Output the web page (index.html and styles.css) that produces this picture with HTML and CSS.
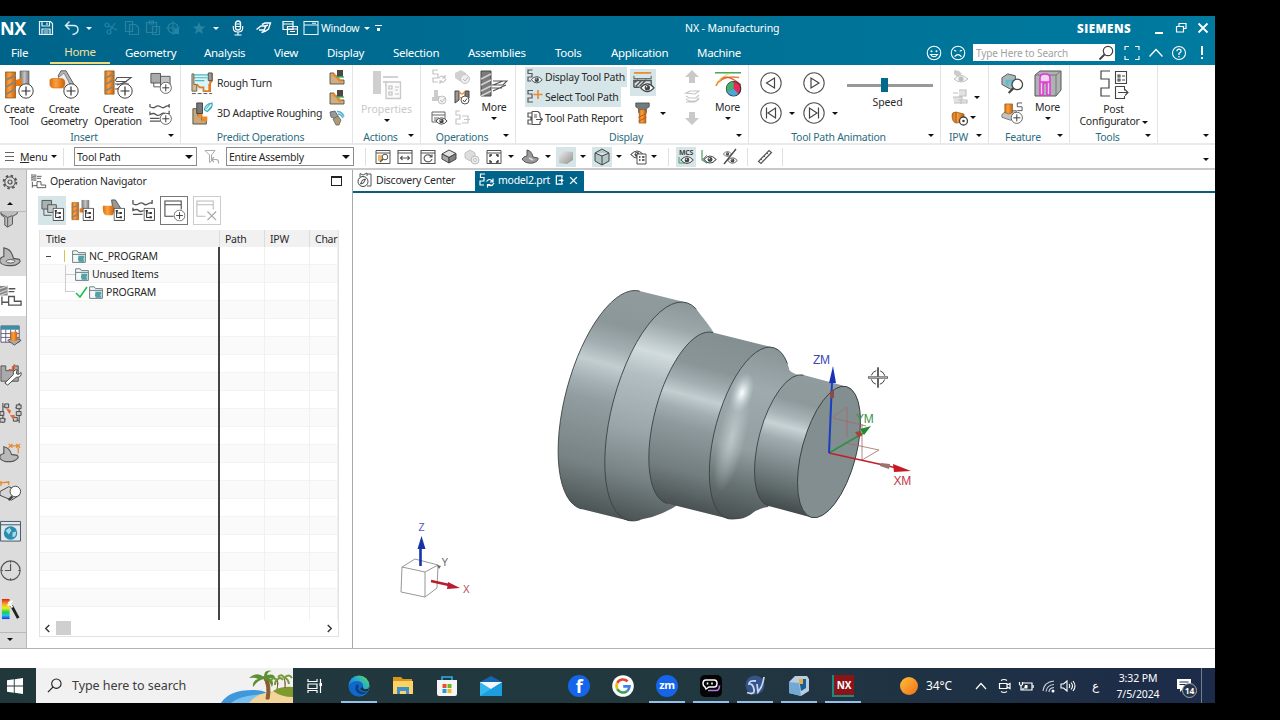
FILE: index.html
```html
<!DOCTYPE html>
<html lang="en">

<head>
    <meta charset="UTF-8">
    <meta name="viewport" content="width=device-width, initial-scale=1.0">
    <title>NX - Manufacturing</title>
    <link rel="stylesheet" href="styles.css">
</head>

<body>
    <!-- icon sprite -->
    <svg class="sprite" width="0" height="0">
        <defs>
            <linearGradient id="steel" x1="0" y1="0" x2="1" y2="0"><stop offset="0" stop-color="#777"/><stop offset=".5" stop-color="#c4c4c4"/><stop offset="1" stop-color="#777"/></linearGradient>
            <linearGradient id="orange" x1="0" y1="0" x2="1" y2="0"><stop offset="0" stop-color="#d86f12"/><stop offset=".4" stop-color="#ffa03c"/><stop offset="1" stop-color="#c8600c"/></linearGradient>
            <linearGradient id="soft" x1="0" y1="0" x2="1" y2="1"><stop offset="0" stop-color="#eee"/><stop offset="1" stop-color="#909090"/></linearGradient>
            <linearGradient id="rainbow" x1="0" y1="0" x2="0" y2="1"><stop offset="0" stop-color="#e02020"/><stop offset=".25" stop-color="#f5a623"/><stop offset=".45" stop-color="#e8f020"/><stop offset=".65" stop-color="#20d040"/><stop offset=".82" stop-color="#20c0f0"/><stop offset="1" stop-color="#2030e0"/></linearGradient>
            <linearGradient id="edgeg" x1="0" y1="1" x2="1" y2="0"><stop offset="0" stop-color="#0c5cc0"/><stop offset=".5" stop-color="#1b9de2"/><stop offset="1" stop-color="#5ee05a"/></linearGradient>
            <linearGradient id="sun" x1="0" y1="0" x2="1" y2="1"><stop offset="0" stop-color="#ffc03a"/><stop offset="1" stop-color="#f0701a"/></linearGradient>
        </defs>
        <symbol id="plus" viewBox="0 0 16 16"><circle cx="8" cy="8" r="7.2" fill="#fff" stroke="#444"/><path d="M8 3.5v9M3.5 8h9" stroke="#333" stroke-width="1.2"/></symbol>
        <symbol id="eye" viewBox="0 0 16 10"><path d="M1 5Q8-3 15 5Q8 13 1 5Z" fill="#fff" stroke="#444" stroke-width="1.2"/><circle cx="8" cy="5" r="2.8" fill="#3f4a4c"/><circle cx="7.2" cy="4" r=".8" fill="#fff"/></symbol>
        <symbol id="mill" viewBox="0 0 10 28"><path d="M0 1h10v25H0Z" fill="url(#orange)" stroke="#8a5a20" stroke-width=".8"/><path d="M0 9L10 4M0 16L10 10M0 23L10 17" stroke="#8b8378" stroke-width="1.8"/></symbol>
        <symbol id="tree" viewBox="0 0 13 15"><path d="M.6.6h11.8v13.8H.6Z" fill="#fff" stroke="#444" stroke-width="1.1"/><path d="M3.5 3v8.5M3.5 6h4M3.5 11h4" stroke="#333" stroke-width="1.2"/><path d="M2.5 2.5h2.5v2H2.5ZM7 5h2.5v2.2H7ZM7 9.8h2.5V12H7Z" fill="#333"/></symbol>
        <symbol id="folder" viewBox="0 0 14 13"><path d="M.6 12.4V.8h4.6l1.2 1.8h7v9.8Z" fill="#f4f8f8" stroke="#6f8084"/><path d="M.6 4.4h12.8" stroke="#6f8084"/><path d="M6 5.5h6.5v6H6Z" fill="#7fc4c0"/><path d="M7 7h5M6 9h5M7 11h5" stroke="#2d7d8c"/></symbol>

        <symbol id="save" viewBox="0 0 16 16"><path d="M1.5 1.5h11l2 2v11h-13Z M4 1.5v4.5h7.5V1.5M4 14.500V9h8v5.500M5.500 11h5M5.500 13h5M9 2.500v2.500" fill="none" stroke="#e6f4f8" stroke-width="1.2"/></symbol>
        <symbol id="undo" viewBox="0 0 16 16"><path d="M5.500 1.500L1.500 5.500L5.500 9.500M2 5.500H9.500Q14 5.500 14 9.500T8.500 14.500" fill="none" stroke="#d9eef5" stroke-width="1.4"/></symbol>
        <symbol id="cut" viewBox="0 0 16 16"><g fill="none" stroke="#2484a4" stroke-width="1.200"><circle cx="4" cy="5" r="2"/><circle cx="6" cy="12" r="2"/><path d="M6 6L14 10M7 10.500L12 3"/></g></symbol>
        <symbol id="copy" viewBox="0 0 16 16"><path d="M1.500 1.500h7v10h-7ZM5.500 4.500h6l3 3v7h-9Z" fill="#08668a" stroke="#2484a4" stroke-width="1.200"/></symbol>
        <symbol id="paste" viewBox="0 0 16 16"><path d="M1.500 2.500h10v10h-10ZM4.500 1h4v3h-4ZM7.500 6.500h7v8h-7Z" fill="#08668a" stroke="#2484a4" stroke-width="1.200"/></symbol>
        <symbol id="target" viewBox="0 0 16 16"><g fill="none" stroke="#2484a4" stroke-width="1.200"><circle cx="8" cy="8" r="5"/><path d="M8 1v14M1 8h14"/></g><path d="M9 9h5v5H9Z" fill="#2484a4"/></symbol>
        <symbol id="star" viewBox="0 0 16 16"><path d="M8 2l1.700 4.300 4.600.3-3.500 3 1.100 4.500L8 11.600l-3.900 2.500 1.100-4.500-3.500-3 4.600-.3Z" fill="#2484a4"/></symbol>
        <symbol id="mic" viewBox="0 0 16 16"><rect x="5.500" y="1" width="5" height="9" rx="2.500" fill="none" stroke="#fff" stroke-width="1.300"/><path d="M3.300 6v2Q3.300 12 8 12t4.700-4V6M8 12v3M4.500 15h7M6 4h4M6 6.500h4" fill="none" stroke="#fff" stroke-width="1.100"/></symbol>
        <symbol id="touch" viewBox="0 0 16 16"><path d="M.5 9.500L5 6h5L8 10H3M6 4.500L9 3h5.500L12.500 9l-3 2-4 1.500M8 6.500L12 5" fill="none" stroke="#fff" stroke-width="1.400"/></symbol>
        <symbol id="windows" viewBox="0 0 16 16"><path d="M1 1.500h10v8H1ZM5.500 6.500h10v8h-10Z" fill="#08668a" stroke="#fff" stroke-width="1.200"/><path d="M1 4h10M5.500 9h10M8 11.500h5" stroke="#fff"/></symbol>
        <symbol id="window" viewBox="0 0 16 16"><path d="M1 1.500h14v13H1ZM1 5h14" fill="none" stroke="#e6f4f8" stroke-width="1.100"/><path d="M9 3.200h4" stroke="#fff"/></symbol>
        <symbol id="restore" viewBox="0 0 12 12"><path d="M4 4V1.500h7v5H8.500M1.500 4.500h7v5.500h-7Z" fill="none" stroke="#fff" stroke-width="1.200"/></symbol>
        <symbol id="close" viewBox="0 0 12 12"><path d="M1.500 1.500l9 9M10.500 1.500l-9 9" stroke="#fff" stroke-width="1.800"/></symbol>
        <symbol id="smile" viewBox="0 0 16 16"><circle cx="8" cy="8" r="6" fill="none" stroke="#fff"/><circle cx="5.800" cy="6.500" r=".9" fill="#fff"/><circle cx="10.200" cy="6.500" r=".9" fill="#fff"/><path d="M4.800 9.300Q8 13.400 11.200 9.300Z" fill="none" stroke="#fff" stroke-width=".9"/></symbol>
        <symbol id="sad" viewBox="0 0 16 16"><circle cx="8" cy="8" r="6" fill="none" stroke="#fff"/><path d="M4.500 5.500l2 1M11.500 5.500l-2 1M5 11.300Q8 7.500 11 11.300" fill="none" stroke="#fff" stroke-width="1.100"/></symbol>
        <symbol id="lens" viewBox="0 0 16 16"><circle cx="10" cy="6" r="4.700" fill="none" stroke="#444" stroke-width="1.200"/><path d="M6.500 9.500L1.500 14.500" stroke="#444" stroke-width="1.900"/></symbol>
        <symbol id="full" viewBox="0 0 16 16"><path d="M1 5V1.500h4M11 1.500h4V5M15 11v3.500h-4M5 14.500H1V11" fill="none" stroke="#fff" stroke-width="1.100"/></symbol>
        <symbol id="chev" viewBox="0 0 16 16"><path d="M1.500 11.500L8 4.500l6.500 7" fill="none" stroke="#fff" stroke-width="1.300"/></symbol>
        <symbol id="help" viewBox="0 0 16 16"><circle cx="8" cy="8" r="6.500" fill="none" stroke="#fff" stroke-width="1.100"/><path d="M5.900 6.300Q6 4.200 8 4.200T10.100 6.200Q10 7.400 8 8.300V10" fill="none" stroke="#fff" stroke-width="1.200"/><circle cx="8" cy="11.800" r=".8" fill="#fff"/></symbol>

        <symbol id="c-tool" viewBox="0 0 30 30"><path d="M16 1h9v16h-9Z" fill="url(#steel)" stroke="#666" stroke-width=".7"/><path d="M12 10l6-2v8h-6Z" fill="#e77a18"/><use href="#mill" x="1" y="1" width="11" height="29"/><use href="#plus" x="14" y="13" width="16" height="16"/></symbol>
        <symbol id="c-geo" viewBox="0 0 30 30"><path d="M12 .8h5L27 18l-5 6L9 6Z" fill="#b4b4b4" stroke="#555" stroke-width=".9"/><path d="M15 3l8 15-5 6L9 8Z" fill="#efefef" stroke="#777" stroke-width=".8"/><path d="M1 12Q0 9 3 8.500H13Q16 9 16 13t-3 5H4Q0 17 1 12Z" fill="url(#orange)" stroke="#c8701c" stroke-width=".6"/><use href="#plus" x="14" y="13" width="16" height="16"/></symbol>
        <symbol id="c-op" viewBox="0 0 30 30"><use href="#mill" x="1" y="0" width="11" height="26"/><path d="M14 7.500h14l-5 4H13M14 15l10-3.500M12 14h14M12 19h9M14 19L25 14M14 7.500L12 11" fill="none" stroke="#555" stroke-width="1.200"/><use href="#plus" x="14" y="13" width="16" height="16"/></symbol>
        <symbol id="c-prog" viewBox="0 0 24 24"><path d="M2 1.500h10v10H2Z" fill="#aaa" stroke="#555"/><path d="M12 4.500h10v10H12Z" fill="#c4c4c4" stroke="#555"/><path d="M5 11.500v4h8" fill="none" stroke="#555"/><use href="#plus" x="11" y="10" width="13" height="13"/></symbol>
        <symbol id="c-meth" viewBox="0 0 24 24"><path d="M1 2v3q4 2 6 0t5 0 5 0 4 0V2M1 10v3q4-2 6 0t5 0 5-1 4 0V9M1 17h10M1 20h11" fill="none" stroke="#555" stroke-width="1.300"/><use href="#plus" x="11" y="11" width="13" height="13"/></symbol>

        <symbol id="rough" viewBox="0 0 24 24"><path d="M3 3h18v9l-5 7H3Z" fill="#daf4f6"/><path d="M3 3h16M3 6h14M4 9h10" stroke="#4cb9c4" stroke-width="1.300"/><path d="M1 2v18h5V13H3V2Z" fill="#d9b98c" stroke="#665"/><path d="M6 13l3 3h4v4h7V2h2v7l-3 4v7" fill="none" stroke="#e27a26" stroke-width="1.800"/><path d="M18 1h4v8h-4Z" fill="#999" stroke="#555"/><path d="M1 22.500h21" stroke="#555" stroke-dasharray="4 2"/></symbol>
        <symbol id="adapt" viewBox="0 0 24 24"><path d="M2 7h5v7h4v5h5v4H2Z" fill="#caa67b" stroke="#554"/><path d="M7 12h5v3h5v5h-6v-4H7Z" fill="#e88a28"/><path d="M6 1h6v11H6Z" fill="#777" stroke="#444"/><path d="M14 8q1-6 8-7q1 5-5 9Z" fill="#d9f3f8" stroke="#35a9b8" stroke-width="1.200"/><path d="M16 7l4-5M18 8l4-4" stroke="#35a9b8"/></symbol>
        <symbol id="stair" viewBox="0 0 16 16"><path d="M1 4h4v3h4v4h6v4H1Z" fill="#cfae85" stroke="#554" stroke-width=".9"/><path d="M4 5l4 3 4 5" stroke="#f08a24" stroke-width="2.500" fill="none"/><path d="M8 1h6v7H8Z" fill="#4b4b45"/><path d="M7 8h8" stroke="#49b070" stroke-width="1.400"/></symbol>
        <symbol id="brush" viewBox="0 0 16 16"><path d="M1 2l5-1 3 5-2 3-5-2Z" fill="#999" stroke="#555" stroke-width=".8"/><path d="M8 1.500q5 0 7 5M9 4q3 0 5 4" fill="none" stroke="#54b3cf" stroke-width="1.500"/><path d="M4 9l5-3 3 4-2 5H7Z" fill="#b19878" stroke="#665" stroke-width=".8"/></symbol>
        <symbol id="props" viewBox="0 0 30 30"><path d="M1 1h8v23H1Z" fill="#cfcfcf"/><path d="M11 7h15M11 12h4M13 15h3" stroke="#c4c4c4" stroke-width="1.600"/><path d="M14 12h14.500v16.500H14Z" fill="#fafafa" stroke="#c8c8c8" stroke-width="1.300"/><path d="M17 16h3v3h-3ZM17 22h3v3h-3ZM23 17h4M23 20h3M23 24h4" fill="none" stroke="#c0c0c0" stroke-width="1.200"/></symbol>
        <symbol id="g-path" viewBox="0 0 18 18"><path d="M8 2H3v4h5v4H3v4h5" fill="none" stroke="#c3c3c3" stroke-width="1.200"/><path d="M9 10q3-4 6 0M16 11q-2 5-6 2M15 7v3h-3M10 16v-3h2" fill="none" stroke="#c3c3c3" stroke-width="1.200"/></symbol>
        <symbol id="g-ver" viewBox="0 0 18 18"><path d="M2 5l6-3 5 3v6l-5 3-6-4Z" fill="#d0d0d0"/><circle cx="12" cy="11" r="4.500" fill="#eee" stroke="#c4c4c4"/><path d="M10 11l2 2 3-4" fill="none" stroke="#bbb"/></symbol>
        <symbol id="g-sim" viewBox="0 0 18 18"><path d="M4 2h4v6h4v5H2V9h2Z" fill="#ccc"/><circle cx="12" cy="12" r="4" fill="#f2f2f2" stroke="#c4c4c4"/><path d="M10 12l2 2 3-4" fill="none" stroke="#bbb"/></symbol>
        <symbol id="verify" viewBox="0 0 18 18"><path d="M2 3h4v9l-4 3Z" fill="#999" stroke="#444"/><path d="M12 3h4v7l-4 3Z" fill="#777" stroke="#444"/><path d="M6 3q3 6 6 0M6 9q3 2 6 0" fill="none" stroke="#e58a30" stroke-width="1.500"/><circle cx="12" cy="12" r="4" fill="#fff" stroke="#555"/><path d="M10 12l1.500 2 2.500-3.500" fill="none" stroke="#444"/></symbol>
        <symbol id="wineye" viewBox="0 0 18 18"><path d="M2 3h13v10H2ZM2 6h13M4 9h5M4 11h3" fill="none" stroke="#666"/><use href="#eye" x="5" y="8" width="13" height="8"/></symbol>
        <symbol id="g-out" viewBox="0 0 18 18"><path d="M7 2H3v4h4v4H3v5h5M9 7h6v7H9M11 10.500h6" fill="none" stroke="#c6c6c6" stroke-width="1.200"/></symbol>
        <symbol id="op-more" viewBox="0 0 28 28"><path d="M1 1h10v25H1Z" fill="#7b7b7b" stroke="#444"/><path d="M1 9l10-5M1 15l10-5M1 21l10-5M1 26l10-5" stroke="#cfcfcf" stroke-width="1.800"/><path d="M13 11h14l-4 4H12M13 21l13-6M13 15l10-4M12 18h10" fill="none" stroke="#555" stroke-width="1.200"/></symbol>
        <symbol id="d-path" viewBox="0 0 16 16"><path d="M5.500 1H1v3.500h4V8H1v4h3" fill="none" stroke="#555" stroke-width="1.200"/><use href="#eye" x="3.500" y="6.500" width="12.500" height="8.500"/></symbol>
        <symbol id="s-path" viewBox="0 0 16 16"><path d="M6 1.500H1V5h4v4H1v4h5" fill="none" stroke="#555" stroke-width="1.200"/><path d="M11 1v9M6.500 5.500h9" stroke="#e58a30" stroke-width="1.600"/></symbol>
        <symbol id="r-path" viewBox="0 0 16 16"><path d="M5 3H1v4h3v3H1v4h3M5 1.500h6l2 2V7M5 1.500v13h8V12M9 9.500h6M13 7l2.500 2.500L13 12" fill="none" stroke="#555" stroke-width="1.200"/><path d="M7 5h3M7 7h3" stroke="#555"/></symbol>
        <symbol id="ipweye" viewBox="0 0 24 24"><path d="M2 2h18" stroke="#e58a30" stroke-width="1.800"/><path d="M2 5v3h18V5" fill="none" stroke="#555"/><path d="M2 17V10h18v5M4 16l6-6M8 16l7-7M3 12l3-3M2 17h6" fill="none" stroke="#555" stroke-width="1.500"/><use href="#eye" x="8" y="12" width="16" height="11"/></symbol>
        <symbol id="holder" viewBox="0 0 18 24"><path d="M2 1h14v4l-3 2v4H5V7L2 5Z" fill="#707b7e" stroke="#444" stroke-width=".8"/><path d="M5.500 8h7v14h-7Z" fill="url(#orange)" stroke="#8a5a20" stroke-width=".7"/><path d="M5 16l8-4M5 20l8-4" stroke="#b05a18"/></symbol>
        <symbol id="g-up" viewBox="0 0 16 16"><path d="M8 1l7 7h-4v6H5V8H1Z" fill="#c9c9c9"/></symbol>
        <symbol id="g-layers" viewBox="0 0 16 16"><path d="M2 4l4-2h9l-4 3ZM2 7l3 2h7l3-3M2 10l3 2h7l3-3M2 13h9l4-3" fill="none" stroke="#c6c6c6" stroke-width="1.200"/></symbol>
        <symbol id="d-more" viewBox="0 0 30 30"><path d="M1 3h28" stroke="#34a34c" stroke-width="1.500"/><path d="M2 17Q8 5 27 8" fill="none" stroke="#e8833a" stroke-width="1.600"/><path d="M7 10Q14 3 29 16" fill="none" stroke="#e5503a" stroke-width="1.300"/><path d="M3 13q10-9 14-9" stroke="#e8d040" fill="none"/><circle cx="21" cy="20" r="7.700" fill="#e8275a" stroke="#333" stroke-width="1.200"/><path d="M21 20V12.500A7.500 7.500 0 0 0 14 23Z" fill="#3fb46a"/><path d="M21 20L14 23A7.500 7.500 0 0 0 26 25.500Z" fill="#49a8d8"/></symbol>
        <symbol id="playback" viewBox="0 0 22 22"><circle cx="11" cy="11" r="10.200" fill="#fff" stroke="#555" stroke-width="1.100"/><path d="M14.500 6v10L6.500 11Z" fill="none" stroke="#444" stroke-width="1.200"/></symbol>
        <symbol id="play" viewBox="0 0 22 22"><circle cx="11" cy="11" r="10.200" fill="#fff" stroke="#555" stroke-width="1.100"/><path d="M8 6v10l8-5Z" fill="none" stroke="#444" stroke-width="1.200"/></symbol>
        <symbol id="first" viewBox="0 0 22 22"><circle cx="11" cy="11" r="10.200" fill="#fff" stroke="#555" stroke-width="1.100"/><path d="M15.500 6v10L8 11ZM6.500 5.500v11" fill="none" stroke="#444" stroke-width="1.200"/></symbol>
        <symbol id="last" viewBox="0 0 22 22"><circle cx="11" cy="11" r="10.200" fill="#fff" stroke="#555" stroke-width="1.100"/><path d="M6.500 6v10l7.500-5ZM15.500 5.500v11" fill="none" stroke="#444" stroke-width="1.200"/></symbol>
        <symbol id="g-eye" viewBox="0 0 18 18"><path d="M3 2l5 1 3 3-5 3-3-3Z" fill="#ccc"/><path d="M3 11q7-7 14 0q-7 6-14 0Z" fill="#f4f4f4" stroke="#c2c2c2"/><circle cx="10" cy="11" r="2.500" fill="#bdbdbd"/></symbol>
        <symbol id="g-stair" viewBox="0 0 18 18"><path d="M8 2h7v6H8M2 5h5M2 9h9v3h5v3H3M7 12h3v4" fill="#e2e2e2" stroke="#c2c2c2" stroke-width="1.200"/></symbol>
        <symbol id="ipwset" viewBox="0 0 18 18"><path d="M1 6q0-3 4-3l8 2v8l-8 1q-4-1-4-8Z" fill="url(#orange)" stroke="#8a5a20" stroke-width=".7"/><path d="M5 3v11" stroke="#8a5a20"/><circle cx="12.500" cy="12" r="4" fill="#fff" stroke="#444" stroke-width="1.300"/><circle cx="12.500" cy="12" r="1.300" fill="#444"/></symbol>
        <symbol id="findf" viewBox="0 0 24 24"><path d="M1 6l6-4 8 2v12l-5 2-9-5Z" fill="#a6b9bd" stroke="#555"/><path d="M5 8h8v8l-3-2V10H8v5l-3-2Z" fill="#5fbcd0"/><circle cx="17" cy="13" r="5.500" fill="#fff" stroke="#444" stroke-width="1.300"/><path d="M13 17l-5 5" stroke="#444" stroke-width="2.200"/></symbol>
        <symbol id="addf" viewBox="0 0 24 24"><path d="M1 13l5-4h10v7l-6 3-9-3Z" fill="#c4c4c4" stroke="#777"/><path d="M4 2h8v9q-4 3-8 0Z" fill="url(#orange)" stroke="#8a5a20" stroke-width=".7"/><path d="M22 1h-5v4h5v4h-5" fill="none" stroke="#555"/><use href="#plus" x="10" y="10" width="13" height="13"/></symbol>
        <symbol id="f-more" viewBox="0 0 28 28"><path d="M1 5l5-4h21v19l-5 6H1Z" fill="#aeb2b2" stroke="#555"/><path d="M1 5h21l5-4M22 5v21" fill="none" stroke="#777"/><path d="M6 25V8q0-4 5-4t5 4v17h-3V13H9v12Z" fill="#efd6ee" stroke="#e334d8" stroke-width="1.500"/><path d="M6 12h10" stroke="#e334d8" stroke-width="1.500"/></symbol>
        <symbol id="post" viewBox="0 0 30 30"><path d="M11 1H2v8h8v9H2v8h9" fill="none" stroke="#444" stroke-width="1.200"/><path d="M16.500 1.500h11v12h-11ZM19 5h2v2h-2ZM19 9h2v2h-2ZM23 6h3M23 10h3M16.500 16.500h9v4M16.500 16.500v12h9V26M19 22.500h10M26 19.500l3 3-3 3" fill="none" stroke="#444" stroke-width="1.100"/></symbol>

        <symbol id="filter" viewBox="0 0 16 16"><path d="M1 1.500h10L7.500 6v6l-2 1.500V6Z" fill="none" stroke="#aaa"/><path d="M10 8L7.500 10.500 10 13M8 10.500h4q3 0 2.500 4" fill="none" stroke="#aaa" stroke-width="1.200"/></symbol>
        <symbol id="fitwin" viewBox="0 0 18 18"><path d="M2 2.500h14v13H2ZM2 5h14" fill="none" stroke="#555"/><path d="M4 7h5v6H4Z" fill="#eeb668"/><circle cx="11" cy="9" r="2.800" fill="#fff" stroke="#555"/><path d="M9 11l-3 3" stroke="#555" stroke-width="1.500"/></symbol>
        <symbol id="panwin" viewBox="0 0 18 18"><path d="M2 2.500h14v13H2ZM2 5h14M4.500 10h9M6.500 8l-2 2 2 2M11.500 8l2 2-2 2" fill="none" stroke="#555" stroke-width="1.100"/></symbol>
        <symbol id="rotwin" viewBox="0 0 18 18"><path d="M2 2.500h14v13H2ZM2 5h14M12.500 8.500A4 3.500 0 1 0 13 11M13 6.500v2.500h-2.500" fill="none" stroke="#555" stroke-width="1.100"/></symbol>
        <symbol id="box3d" viewBox="0 0 18 18"><path d="M2 6l7-4 7 3.500-7 4Z" fill="#e2e2e2" stroke="#444"/><path d="M2 6v5l7 4V9.500Z" fill="#aaa" stroke="#444"/><path d="M9 9.500V15l7-4V5.500Z" fill="#828282" stroke="#444"/></symbol>
        <symbol id="g-box" viewBox="0 0 18 18"><path d="M2 5l5-3 5 3v5l-5 3-5-3Z" fill="#ddd" stroke="#c2c2c2"/><circle cx="12" cy="12" r="4" fill="#eee" stroke="#bbb"/><circle cx="12" cy="12" r="1.500" fill="#fff" stroke="#bbb"/></symbol>
        <symbol id="fit" viewBox="0 0 18 18"><path d="M2 2.500h14v13H2ZM2 5h14" fill="none" stroke="#555"/><path d="M5 9V7h2M11 7h2v2M13 12v2h-2M7 14H5v-2" fill="none" stroke="#333" stroke-width="1.300"/></symbol>
        <symbol id="bracket" viewBox="0 0 18 18"><path d="M1 11q2-3 5-3V2q5 1 6 7l5 1q1 3-5 5-8 1-11-4Z" fill="#999" stroke="#555"/><path d="M8 10l4 2" stroke="#ddd" stroke-width="1.500"/></symbol>
        <symbol id="shade" viewBox="0 0 20 20"><path d="M3 8l6-4 8 1v8l-6 4-8-1Z" fill="url(#soft)"/></symbol>
        <symbol id="cube" viewBox="0 0 20 20"><path d="M3 6l7-4 7 4v8l-7 4-7-4ZM3 6l7 3 7-3M10 9v9" fill="#b5c8c8" stroke="#444"/></symbol>
        <symbol id="eyelist" viewBox="0 0 18 18"><use href="#eye" x="1" y="2" width="14" height="9"/><path d="M8 6h9v10H8Z" fill="#fff" stroke="#555"/><path d="M10 9h1.500M13 9h2.500M10 12h1.500M13 12h2.500" stroke="#333" stroke-width="1.300"/></symbol>
        <symbol id="mcs" viewBox="0 0 20 20"><path d="M3 10v6h6" stroke="#39a35c" fill="none"/><use href="#eye" x="4" y="8.500" width="14" height="9"/></symbol>
        <symbol id="wcs" viewBox="0 0 18 18"><path d="M3 2v10l5 3" fill="none" stroke="#49a060" stroke-width="1.200"/><path d="M3 12l5-5" stroke="#888"/><use href="#eye" x="4" y="7" width="14" height="9"/></symbol>
        <symbol id="noeye" viewBox="0 0 18 18"><use href="#eye" x="1" y="3" width="11" height="6"/><use href="#eye" x="6" y="9" width="11" height="7"/><path d="M15 1L3 16" stroke="#444" stroke-width="1.300"/></symbol>
        <symbol id="ruler" viewBox="0 0 18 18"><path d="M2.500 13.500L13 2.500l2.500 2L5 15.500Z" fill="#fff" stroke="#555" stroke-width="1.200"/><path d="M5 11l1.300 1.300M8 8l1.300 1.300M11 5l1.300 1.300" stroke="#555"/></symbol>

        <symbol id="gear" viewBox="0 0 16 16"><circle cx="8" cy="8" r="6.400" fill="none" stroke="#555" stroke-width="1.900" stroke-dasharray="2.500 2.500"/><circle cx="8" cy="8" r="5.200" fill="none" stroke="#555"/><circle cx="8" cy="8" r="2" fill="none" stroke="#555" stroke-width="1.200"/></symbol>
        <symbol id="asm" viewBox="0 0 24 24"><path d="M1 3h17v5l-5 3v8l-5 3-3-2v-8L1 9Z" fill="#bdbdbd" stroke="#555"/><path d="M8 22V12l5-2M8 12L1 8" fill="none" stroke="#555"/></symbol>
        <symbol id="part" viewBox="0 0 24 24"><path d="M0 18q-1-5 4-6V3q8 1 10 11l6 1q3 3-4 6-12 2-16-3Z" fill="#b9b9b9" stroke="#555" stroke-width="1.200"/><ellipse cx="11" cy="17" rx="4.500" ry="1.800" fill="#eee" stroke="#555"/></symbol>
        <symbol id="nav" viewBox="0 0 24 24"><path d="M0 2h8v10H0Z" fill="#888"/><path d="M0 5l8-3M0 9l8-3M0 12l8-3" stroke="#ddd"/><path d="M9 5h7M9 8h6M2 13v9M2 19h7M9 22v-9h6v5h7v4Z" fill="none" stroke="#555" stroke-width="1.400"/></symbol>
        <symbol id="table" viewBox="0 0 24 24"><path d="M1 2h19v17H1Z" fill="#fff" stroke="#557"/><path d="M1 2h19v4H1Z" fill="#3b8ea5"/><path d="M1 10h19M1 14h19M6 6v13M11 6v13M16 6v13" stroke="#557" stroke-width=".9"/><path d="M8 17l7-3 7 3-7 5Z" fill="#aaa" stroke="#555"/><path d="M11 8h7v9q-4 2-7 0Z" fill="url(#orange)"/></symbol>
        <symbol id="wrench" viewBox="0 0 24 24"><path d="M1 3h5v5h8V3h5v16H1Z" fill="#aaa" stroke="#555"/><path d="M9 7h4V3M15 1v5" fill="none" stroke="#e5683a" stroke-width="1.400"/><path d="M5 21l9-9q-1-5 4-5l-1 4 2 1 3-2q1 5-5 5l-9 8Z" fill="#fff" stroke="#444"/></symbol>
        <symbol id="links" viewBox="0 0 24 24"><path d="M3 1v21M3 5h3M3 12h-3M3 18h3M20 1v21M20 6h-4M20 19h-4" stroke="#555" stroke-width="1.200"/><path d="M5 2h4v4H5ZM0 10h4v4H0ZM0 17h5v4H0ZM17 3h5v4h-5ZM17 10h5v4h-5ZM14 16h4v4h-4Z" fill="#ccc" stroke="#444"/><path d="M7 7l4 2-1 3ZM11 14l4 0-1 4Z" fill="#e5683a" stroke="#e5683a"/></symbol>
        <symbol id="part2" viewBox="0 0 24 24"><path d="M0 18q-1-4 4-5V6q6 1 8 8l6 1q3 3-4 6-10 2-14-3Z" fill="#b9b9b9" stroke="#555" stroke-width="1.200"/><path d="M9 3l4 4M13 3L9 7M17 3l4 4M21 3l-4 4M12 5h6M19 7v6" stroke="#e58a30" stroke-width="1.300"/></symbol>
        <symbol id="search3d" viewBox="0 0 24 24"><path d="M0 12l9-5 11 4v5l-8 5-12-5Z" fill="#d5d5d5" stroke="#444"/><path d="M1 3l8-1M1 1v5M9 1v4" stroke="#e58a30" stroke-width="1.500"/><circle cx="16" cy="12" r="5.500" fill="#fff" stroke="#444"/><path d="M13 17l-4 4" stroke="#444" stroke-width="2.500"/></symbol>
        <symbol id="web" viewBox="0 0 24 24"><path d="M.6 1.500h20.800v20.500H.6ZM.6 5h20.800" fill="#dfe8ea" stroke="#456"/><circle cx="11" cy="13.500" r="7" fill="#2a8db0"/><path d="M6 11l4-3 2 3-3 4ZM13 13l4-1-1 5-3 1Z" fill="#a6dce8"/></symbol>
        <symbol id="clock" viewBox="0 0 24 24"><circle cx="11" cy="12" r="10" fill="none" stroke="#555" stroke-width="1.200"/><path d="M11 5v7H5M11 2v2M11 20v2M19 12h2M1 12h2" fill="none" stroke="#555" stroke-width="1.200"/></symbol>
        <symbol id="colors" viewBox="0 0 24 24"><path d="M2 1h8v21H2Z" fill="url(#rainbow)"/><path d="M12 8l7 13" stroke="#222" stroke-width="3"/><path d="M9 4l4 6M13 3l-5 5" stroke="#fff" stroke-width="2"/></symbol>

        <symbol id="n-prog" viewBox="0 0 24 24"><path d="M1 1.500h10v9H1Z" fill="#a8b2b3" stroke="#555"/><path d="M7 6h9v8H7Z" fill="#c2c8c8" stroke="#555"/><path d="M3 11v6h8" fill="none" stroke="#555"/><use href="#tree" x="12" y="9" width="12" height="14"/></symbol>
        <symbol id="n-tool" viewBox="0 0 24 24"><path d="M11 1h8v9h-8Z" fill="url(#steel)"/><path d="M9 10l5-1v5H9Z" fill="#e77a18"/><use href="#mill" x="0" y="3" width="9" height="20"/><use href="#tree" x="12" y="9" width="12" height="14"/></symbol>
        <symbol id="n-geo" viewBox="0 0 24 24"><path d="M10 1h4l7 11-4 4-6-8Z" fill="#999" stroke="#555"/><path d="M1 7h11q2 6-1 10H4Q0 15 1 7Z" fill="url(#orange)"/><use href="#tree" x="12" y="9" width="12" height="14"/></symbol>
        <symbol id="n-meth" viewBox="0 0 24 24"><path d="M1 1v4q3 2 6 0t5 0 5 0 4 0V1M1 9v3q4-2 6 0t5 0M1 16h10" fill="none" stroke="#555" stroke-width="1.400"/><use href="#tree" x="12" y="9" width="12" height="14"/></symbol>
        <symbol id="n-add" viewBox="0 0 24 24"><path d="M11 18H2V2h17v9M2 6h17" fill="none" stroke="#444" stroke-width="1.100"/><use href="#plus" x="11" y="11" width="12.500" height="12.500"/></symbol>
        <symbol id="n-del" viewBox="0 0 24 24"><path d="M11 18H2V2h17v9M2 6h17" fill="none" stroke="#bbb" stroke-width="1.100"/><path d="M13 13l9 9M22 13l-9 9" stroke="#aaa" stroke-width="1.300"/></symbol>
        <symbol id="disc" viewBox="0 0 16 16"><path d="M3 5V1.500L6 3l4-2v3M10 2h4v12h-4" fill="none" stroke="#555"/><circle cx="6" cy="9.500" r="5" fill="#fff" stroke="#444"/><path d="M8.500 7l-2 4-3 1 2-4Z" fill="none" stroke="#444"/></symbol>
        <symbol id="tabop" viewBox="0 0 16 16"><path d="M6 2H1.500v3.500H5V9H1v4h4" fill="none" stroke="#fff" stroke-width="1.200"/><path d="M7.500 9.500q3-4 6 0M15 11q-2 4-6 2M14 6.500v3.500h-3M8.500 15.500V12.500h3" fill="none" stroke="#fff" stroke-width="1.200"/></symbol>
        <symbol id="doc" viewBox="0 0 10 12"><path d="M8 4V1H1.200v10H8V9M4 6.500h5M7 4.500l2 2-2 2" fill="none" stroke="#fff" stroke-width="1.500"/></symbol>

        <symbol id="winlogo" viewBox="0 0 16 16"><path d="M0 2.300L6.800 1.300V7.500H0ZM7.700 1.200L16 0v7.500H7.700ZM0 8.500h6.800v6.200L0 13.700ZM7.700 8.500H16V16L7.700 14.800Z" fill="#fff"/></symbol>
        <symbol id="taskview" viewBox="0 0 16 16"><path d="M1 1v2.500h9V1M1 15v-2.500h9V15M1 6h9v4.500H1ZM13.500 1v14" fill="none" stroke="#fff" stroke-width="1.200"/><path d="M12.500 5h2.500v3h-2.500Z" fill="#fff"/></symbol>
        <symbol id="edge" viewBox="0 0 22 22"><circle cx="11" cy="11" r="10.500" fill="url(#edgeg)"/><path d="M1 14Q0 7 8 6q7 0 7 5-1 2 1 3 4 1 5-2 0 7-9 9-8 1-11-7Z" fill="#1168c8"/><path d="M9 9q-4 5 1 9 5 3 9-1-4 1-7-1t-1-5Z" fill="#0b3f86"/><path d="M15 11q-1 2 1 3 4 1 5-2l-1 4q-5 1-8-2Z" fill="#1f3238"/></symbol>
        <symbol id="explorer" viewBox="0 0 22 22"><path d="M1 2h8l2 2h9v4H1Z" fill="#d9951c"/><path d="M1 6h20v13H1Z" fill="#fbd463"/><path d="M5 12h12v7h-3v-3H8v3H5Z" fill="#3e8fcf"/></symbol>
        <symbol id="store" viewBox="0 0 22 22"><path d="M6 6V2h10v4" fill="none" stroke="#2ab0e8" stroke-width="1.600"/><path d="M1 5h20v14q0 2-2 2H3q-2 0-2-2Z" fill="#f5f5f5"/><path d="M6.500 9h4v4h-4Z" fill="#e8502a"/><path d="M11.500 9h4v4h-4Z" fill="#6ab52c"/><path d="M6.500 14h4v4h-4Z" fill="#1d9ae0"/><path d="M11.500 14h4v4h-4Z" fill="#f7b71d"/></symbol>
        <symbol id="mail" viewBox="0 0 22 22"><path d="M0 7L11 1l11 6v5H0Z" fill="#1666ae"/><path d="M0 7h22v14H0Z" fill="#35b8ee"/><path d="M0 7h22L11 14Z" fill="#f2f8fb"/><path d="M0 21L22 7v14Z" fill="#1c9de0"/><path d="M0 7h22L11 13.500Z" fill="#f2f8fb"/></symbol>
        <symbol id="google" viewBox="0 0 22 22"><circle cx="11" cy="11" r="10.800" fill="#fff"/><g fill="none" stroke-width="2.600"><path d="M15.600 6.400A6.500 6.500 0 0 0 5.300 7.900" stroke="#e8412f"/><path d="M5.300 7.900a6.500 6.500 0 0 0 0 6.200" stroke="#f8b90c"/><path d="M5.300 14.100a6.500 6.500 0 0 0 10 1.800" stroke="#34a351"/><path d="M15.300 15.900A6.500 6.500 0 0 0 17.500 11.400H11.200" stroke="#4081ec"/></g></symbol>
        <symbol id="chat" viewBox="0 0 22 22"><rect width="22" height="22" rx="5" fill="#050505"/><path d="M6 5h8q3 0 3 3.500T14 12H9l-3 2-1-2q-2-1-2-3.500Q3 5 6 5Z" fill="none" stroke="#fff" stroke-width="1.500"/><path d="M7.500 7.500v2M12 7.500v2" stroke="#fff" stroke-width="1.600"/><path d="M8 15.500h8q3.500 0 3.500-5" fill="none" stroke="#b57ae0" stroke-width="1.600"/></symbol>
        <symbol id="snap" viewBox="0 0 22 22"><circle cx="11" cy="10" r="9.500" fill="#34558c"/><path d="M3 17.500q8 3 7-3T5 9q0-4 7-3M13 9l1 8q5-6 6-15" fill="none" stroke="#c9d6ec" stroke-width="1.800"/></symbol>
        <symbol id="vmbox" viewBox="0 0 22 22"><path d="M1 7L7 1h12l2 3v12l-8 5-12-3Z" fill="#b9cede"/><path d="M1 7l10 1 2 13-12-3Z" fill="#74a8d4"/><path d="M11 4h7v9l-5 3Z" fill="#1b5d96"/><path d="M11 4h4v5h-4Z" fill="#e8b03c"/></symbol>
        <symbol id="s-up" viewBox="0 0 12 12"><path d="M1 9l5-5.500L11 9" fill="none" stroke="#fff" stroke-width="1.200"/></symbol>
        <symbol id="cam" viewBox="0 0 14 16"><path d="M1.500 5.500h7.500v5H1.500ZM9 7l3-1.500v5L9 9M3 2.500Q6 .5 9 2.500M3 13.500q3 2 6 0" fill="none" stroke="#fff" stroke-width="1.200"/></symbol>
        <symbol id="batt" viewBox="0 0 16 12"><path d="M5 3h9v7H5V8M1.500 2v2.500q1.500 2 3 0V2M3 5.500V10h2" fill="none" stroke="#fff" stroke-width="1.200"/><path d="M7 5h2.500v3.500H6ZM14.500 5h1.200v3h-1.200Z" fill="#fff"/></symbol>
        <symbol id="wifi" viewBox="0 0 14 14"><path d="M1 12Q2 3 12 2M4 12.500Q5 6 12 5.500M7 13q0-4 5-4.500" fill="none" stroke="#ccd4e0" stroke-width="1.100"/><circle cx="11" cy="12" r="1.500" fill="#fff"/></symbol>
        <symbol id="vol" viewBox="0 0 16 14"><path d="M1 5h2.500L7 2v10L3.500 9H1ZM9 5q1.500 2 0 4M11 3.500q3 3.500 0 7M13 2q4 5 0 10" fill="none" stroke="#fff" stroke-width="1.100"/></symbol>
        <symbol id="note" viewBox="0 0 16 16"><path d="M1 1h14v10H7l-3 3v-3H1Z" fill="#fff"/><path d="M3.500 4h9M3.500 6.500h9" stroke="#1d2d45"/></symbol>
    </svg>

    <div class="screen">
        <header class="titlebar">
            <div class="quick">
                <b class="nx">NX</b>
                <svg class="i16"><use href="#save"/></svg>
                <svg class="i16"><use href="#undo"/></svg>
                <i class="dd light"></i>
                <svg class="i16"><use href="#cut"/></svg>
                <svg class="i16"><use href="#copy"/></svg>
                <svg class="i16"><use href="#paste"/></svg>
                <svg class="i16"><use href="#target"/></svg>
                <svg class="i16"><use href="#star"/></svg>
                <i class="dd light"></i>
                <svg class="i16"><use href="#mic"/></svg>
                <svg class="i16"><use href="#touch"/></svg>
                <svg class="i16"><use href="#windows"/></svg>
                <svg class="i16"><use href="#window"/></svg>
                <span>Window</span>
                <i class="dd light"></i>
                <i class="dd light over"></i>
                <span class="title">NX - Manufacturing</span>
                <b class="siemens">SIEMENS</b>
                <i class="min"></i>
                <svg class="i12"><use href="#restore"/></svg>
                <svg class="i12"><use href="#close"/></svg>
            </div>
            <nav class="tabs">
                <span>File</span>
                <span class="active">Home</span>
                <span>Geometry</span>
                <span>Analysis</span>
                <span>View</span>
                <span>Display</span>
                <span>Selection</span>
                <span>Assemblies</span>
                <span>Tools</span>
                <span>Application</span>
                <span>Machine</span>
                <svg class="i18"><use href="#smile"/></svg>
                <svg class="i18"><use href="#sad"/></svg>
                <div class="find">Type Here to Search<svg class="i16"><use href="#lens"/></svg></div>
                <svg class="i16"><use href="#full"/></svg>
                <svg class="i16"><use href="#chev"/></svg>
                <svg class="i16"><use href="#help"/></svg>
                <i class="bang"></i>
            </nav>
        </header>

        <section class="ribbon">
            <div class="group insert">
                <div class="body">
                    <div class="big"><svg class="i30"><use href="#c-tool"/></svg>Create<br>Tool</div>
                    <div class="big"><svg class="i30"><use href="#c-geo"/></svg>Create<br>Geometry</div>
                    <div class="big"><svg class="i30"><use href="#c-op"/></svg>Create<br>Operation</div>
                    <div class="two"><svg class="i24"><use href="#c-prog"/></svg><svg class="i24"><use href="#c-meth"/></svg></div>
                </div>
                <div class="foot"><span>Insert</span><i class="dd"></i></div>
            </div>
            <div class="group predict">
                <div class="body">
                    <div class="two wide">
                        <div class="cmd"><svg class="i24"><use href="#rough"/></svg>Rough Turn</div>
                        <div class="cmd"><svg class="i24"><use href="#adapt"/></svg>3D Adaptive Roughing</div>
                    </div>
                    <div class="three">
                        <svg class="i16"><use href="#stair"/></svg>
                        <svg class="i16"><use href="#stair"/></svg>
                        <svg class="i16"><use href="#brush"/></svg>
                    </div>
                </div>
                <div class="foot"><span>Predict Operations</span><i class="dd none"></i></div>
            </div>
            <div class="group actions">
                <div class="body">
                    <div class="big off"><svg class="i30"><use href="#props"/></svg>Properties<i class="dd"></i></div>
                </div>
                <div class="foot"><span>Actions</span><i class="dd"></i></div>
            </div>
            <div class="group operations">
                <div class="body">
                    <div class="three">
                        <svg class="i18"><use href="#g-path"/></svg>
                        <svg class="i18"><use href="#g-sim"/></svg>
                        <svg class="i18"><use href="#wineye"/></svg>
                    </div>
                    <div class="three">
                        <svg class="i18"><use href="#g-ver"/></svg>
                        <svg class="i18"><use href="#verify"/></svg>
                        <svg class="i18"><use href="#g-out"/></svg>
                    </div>
                    <div class="big more"><svg class="i28"><use href="#op-more"/></svg>More<i class="dd"></i></div>
                </div>
                <div class="foot"><span>Operations</span><i class="dd"></i></div>
            </div>
            <div class="group display">
                <div class="body">
                    <div class="three list">
                        <div class="cmd on"><svg class="i16"><use href="#d-path"/></svg>Display Tool Path</div>
                        <div class="cmd on short"><svg class="i16"><use href="#s-path"/></svg>Select Tool Path</div>
                        <div class="cmd"><svg class="i16"><use href="#r-path"/></svg>Tool Path Report</div>
                    </div>
                    <div class="tools">
                        <div class="hot"><svg class="i24"><use href="#ipweye"/></svg></div>
                        <div class="holder"><svg class="i24"><use href="#holder"/></svg><i class="dd"></i></div>
                    </div>
                    <div class="three">
                        <svg class="i16"><use href="#g-up"/></svg>
                        <svg class="i16"><use href="#g-layers"/></svg>
                        <svg class="i16 flip"><use href="#g-up"/></svg>
                    </div>
                    <div class="big more"><svg class="i30"><use href="#d-more"/></svg>More<i class="dd"></i></div>
                </div>
                <div class="foot"><span>Display</span><i class="dd"></i></div>
            </div>
            <div class="group anim">
                <div class="body">
                    <div class="two player">
                        <div><svg class="i22"><use href="#playback"/></svg></div>
                        <div><svg class="i22"><use href="#first"/></svg><i class="dd"></i></div>
                    </div>
                    <div class="two player">
                        <div><svg class="i22"><use href="#play"/></svg></div>
                        <div><svg class="i22"><use href="#last"/></svg><i class="dd"></i></div>
                    </div>
                    <div class="speed"><div class="track"><i></i></div><span>Speed</span></div>
                </div>
                <div class="foot"><span>Tool Path Animation</span><i class="dd"></i></div>
            </div>
            <div class="group ipw">
                <div class="body">
                    <div class="three start">
                        <div class="cmd"><svg class="i18"><use href="#g-eye"/></svg></div>
                        <div class="cmd"><svg class="i18"><use href="#g-stair"/></svg><i class="dd far"></i></div>
                        <div class="cmd"><svg class="i18"><use href="#ipwset"/></svg><i class="dd"></i></div>
                    </div>
                </div>
                <div class="foot"><span>IPW</span><i class="dd"></i></div>
            </div>
            <div class="group feature">
                <div class="body">
                    <div class="two"><svg class="i24"><use href="#findf"/></svg><svg class="i24"><use href="#addf"/></svg></div>
                    <div class="big more"><svg class="i28"><use href="#f-more"/></svg>More<i class="dd"></i></div>
                </div>
                <div class="foot"><span>Feature</span><i class="dd"></i></div>
            </div>
            <div class="group post">
                <div class="body">
                    <div class="big"><svg class="i30"><use href="#post"/></svg>Post<div class="line">Configurator<i class="dd"></i></div></div>
                </div>
                <div class="foot"><span>Tools</span><i class="dd"></i></div>
            </div>
            <div class="group rest">
                <div class="body"></div>
                <div class="foot"><span></span><i class="dd"></i></div>
            </div>
        </section>

        <section class="selbar">
            <i class="burger"></i>
            <span><u>M</u>enu</span>
            <i class="dd"></i>
            <i class="sep"></i>
            <div class="select">Tool Path<i class="dd wide"></i></div>
            <svg class="i16"><use href="#filter"/></svg>
            <div class="select second">Entire Assembly<i class="dd wide"></i></div>
            <i class="sep"></i>
            <svg class="i18"><use href="#fitwin"/></svg>
            <svg class="i18"><use href="#panwin"/></svg>
            <svg class="i18"><use href="#rotwin"/></svg>
            <svg class="i18"><use href="#box3d"/></svg>
            <svg class="i18"><use href="#g-box"/></svg>
            <svg class="i18"><use href="#fit"/></svg>
            <i class="dd"></i>
            <svg class="i18"><use href="#bracket"/></svg>
            <i class="dd"></i>
            <svg class="i20 lit"><use href="#shade"/></svg>
            <i class="dd"></i>
            <svg class="i20 lit"><use href="#cube"/></svg>
            <i class="dd"></i>
            <svg class="i18"><use href="#eyelist"/></svg>
            <i class="dd"></i>
            <i class="sep"></i>
            <svg class="i20 lit"><use href="#mcs"/><text x="3" y="8" class="mcs">MCS</text></svg>
            <svg class="i18"><use href="#wcs"/></svg>
            <svg class="i18"><use href="#noeye"/></svg>
            <i class="sep"></i>
            <svg class="i18"><use href="#ruler"/></svg>
            <i class="sep"></i>
            <i class="dd low"></i>
        </section>

        <main class="work">
            <aside class="rail">
                <div class="railtop"><svg class="i16"><use href="#gear"/></svg><i class="up"></i></div>
                <div class="raillist">
                    <div><svg class="i24"><use href="#asm"/></svg></div>
                    <div><svg class="i24"><use href="#part"/></svg></div>
                    <div class="cur"><svg class="i24"><use href="#nav"/></svg></div>
                    <div><svg class="i24"><use href="#table"/></svg></div>
                    <div><svg class="i24"><use href="#wrench"/></svg></div>
                    <div><svg class="i24"><use href="#links"/></svg></div>
                    <div><svg class="i24"><use href="#part2"/></svg></div>
                    <div><svg class="i24"><use href="#search3d"/></svg></div>
                    <div><svg class="i24"><use href="#web"/></svg></div>
                    <div><svg class="i24"><use href="#clock"/></svg></div>
                    <div><svg class="i24"><use href="#colors"/></svg></div>
                </div>
                <div class="railend"><i class="dd"></i></div>
            </aside>

            <section class="navigator">
                <div class="navhead"><svg class="i16"><use href="#nav"/></svg><span>Operation Navigator</span><i class="maxi"></i></div>
                <div class="navtools">
                    <div class="on"><svg class="i24"><use href="#n-prog"/></svg></div>
                    <div><svg class="i24"><use href="#n-tool"/></svg></div>
                    <div><svg class="i24"><use href="#n-geo"/></svg></div>
                    <div><svg class="i24"><use href="#n-meth"/></svg></div>
                    <div class="framed"><svg class="i24"><use href="#n-add"/></svg></div>
                    <div class="framed dim"><svg class="i24"><use href="#n-del"/></svg></div>
                </div>
                <div class="grid">
                    <div class="cols"><span>Title</span><span>Path</span><span>IPW</span><span>Char</span></div>
                    <div class="rows">
                        <div class="names">
                            <div class="root"><i class="minus"></i><i class="stem"></i><svg class="fold"><use href="#folder"/></svg>NC_PROGRAM</div>
                            <div class="kid"><i class="elbow"></i><svg class="fold"><use href="#folder"/></svg>Unused Items</div>
                            <div class="kid last"><i class="elbow"></i><svg class="tick" viewBox="0 0 13 12"><path d="M1 7l4 4 7-10" fill="none" stroke="#1fc04c" stroke-width="1.600"/></svg><svg class="fold"><use href="#folder"/></svg>PROGRAM</div>
                        </div>
                        <div class="col"></div>
                        <div class="col"></div>
                        <div class="col"></div>
                    </div>
                    <div class="hscroll"><svg viewBox="0 0 8 10"><path d="M6 1L2 5l4 4" fill="none" stroke="#333" stroke-width="1.600"/></svg><i></i><svg viewBox="0 0 8 10"><path d="M2 1l4 4-4 4" fill="none" stroke="#333" stroke-width="1.600"/></svg></div>
                </div>
            </section>

            <section class="view">
                <div class="viewtabs">
                    <div class="vt"><svg class="i16"><use href="#disc"/></svg>Discovery Center</div>
                    <div class="vt active"><svg class="i16"><use href="#tabop"/></svg>model2.prt<svg class="doc"><use href="#doc"/></svg><svg class="x"><use href="#close"/></svg></div>
                </div>
                <svg class="canvas" viewBox="353 193 862 455">
                    <defs>
                        <linearGradient id="gBig" gradientUnits="userSpaceOnUse" x1="639.7" y1="291.1" x2="581.3" y2="508.9"><stop offset="0" stop-color="#8f9b9d"/><stop offset=".17" stop-color="#8b9799"/><stop offset=".27" stop-color="#a2aeb1"/><stop offset=".35" stop-color="#c3ced1"/><stop offset=".44" stop-color="#a4b0b3"/><stop offset=".52" stop-color="#919da0"/><stop offset=".8" stop-color="#778284"/><stop offset="1" stop-color="#4c5555"/></linearGradient>
                        <linearGradient id="gCone" gradientUnits="userSpaceOnUse" x1="686" y1="303" x2="628" y2="520"><stop offset="0" stop-color="#8b9799"/><stop offset=".12" stop-color="#9ca8aa"/><stop offset=".25" stop-color="#d2dcde"/><stop offset=".36" stop-color="#b2bec1"/><stop offset=".6" stop-color="#9aa6a9"/><stop offset=".8" stop-color="#788486"/><stop offset="1" stop-color="#4b5354"/></linearGradient>
                        <linearGradient id="gMid" gradientUnits="userSpaceOnUse" x1="712.900" y1="332.500" x2="667.100" y2="503.500"><stop offset="0" stop-color="#838f91"/><stop offset=".2" stop-color="#899597"/><stop offset=".3" stop-color="#a2aeb1"/><stop offset=".38" stop-color="#c3ced1"/><stop offset=".46" stop-color="#a2aeb1"/><stop offset=".55" stop-color="#8e9a9d"/><stop offset=".8" stop-color="#727d7f"/><stop offset="1" stop-color="#485051"/></linearGradient>
                        <linearGradient id="gFil" gradientUnits="userSpaceOnUse" x1="773" y1="347" x2="728" y2="518"><stop offset="0" stop-color="#889496"/><stop offset=".25" stop-color="#9eaaad"/><stop offset=".6" stop-color="#929ea0"/><stop offset=".8" stop-color="#687374"/><stop offset="1" stop-color="#485051"/></linearGradient>
                        <linearGradient id="gSmall" gradientUnits="userSpaceOnUse" x1="803.500" y1="375.100" x2="768.500" y2="505.900"><stop offset="0" stop-color="#8f9b9d"/><stop offset=".2" stop-color="#8d999b"/><stop offset=".32" stop-color="#a8b4b7"/><stop offset=".4" stop-color="#c8d3d6"/><stop offset=".5" stop-color="#a0acaf"/><stop offset=".62" stop-color="#899598"/><stop offset=".85" stop-color="#606b6c"/><stop offset="1" stop-color="#434b4c"/></linearGradient>
                        <radialGradient id="gSpot"><stop offset="0" stop-color="#fff"/><stop offset=".3" stop-color="#e2eaec" stop-opacity=".85"/><stop offset="1" stop-color="#c0cccf" stop-opacity="0"/></radialGradient>
                        <radialGradient id="gGlow"><stop offset="0" stop-color="#c6d1d4" stop-opacity=".8"/><stop offset="1" stop-color="#c0cccf" stop-opacity="0"/></radialGradient>
                    </defs>
                    <!-- turned part, back to front -->
                    <path d="M639.700 291.100A45 112.700 15 0 0 581.300 508.900L627.800 520.400A45 112.700 15 0 0 686.200 302.600Z" fill="url(#gBig)"/>
                    <path d="M686.200 302.600Q697 307 716 336L676 506Q652 521 627.800 520.400A45 112.700 15 0 1 686.200 302.600Z" fill="url(#gCone)"/>
                    <path d="M712.900 332.500A35.400 88.500 15 0 0 667.100 503.500L727.600 518.500A35.400 88.500 15 0 0 773.400 347.500Z" fill="url(#gMid)"/>
                    <path d="M773.400 347.500Q786 355 789 370Q794 375 804 376L768 507Q758 508 750 515Q741 521 727.600 518.500A35.400 88.500 15 0 1 773.400 347.500Z" fill="url(#gFil)"/>
                    <ellipse cx="732" cy="437" rx="14" ry="56" transform="rotate(13 732 437)" fill="url(#gGlow)"/>
                    <ellipse cx="742" cy="393" rx="11" ry="21" transform="rotate(18 742 393)" fill="url(#gSpot)"/>
                    <path d="M803.500 375.100A27.100 67.700 15 0 0 768.500 505.900L811.500 517.400A27.100 67.700 15 0 0 846.500 386.600Z" fill="url(#gSmall)"/>
                    <ellipse cx="829" cy="452" rx="27.100" ry="67.700" transform="rotate(15 829 452)" fill="#838e90"/>
                    <g fill="none" stroke="#3a4142" stroke-width=".9">
                        <path d="M639.700 291.100A45 112.700 15 0 0 581.300 508.900"/>
                        <path d="M696.500 309.300A45 112.700 15 1 0 640.100 519.700"/>
                        <path d="M712.900 332.500A35.400 88.500 15 0 0 667.100 503.500"/>
                        <path d="M787.400 363.600A35.400 88.500 15 1 0 737.300 518"/>
                        <path d="M803.500 375.100A27.100 67.700 15 0 0 768.500 505.900"/>
                        <ellipse cx="829" cy="452" rx="27.100" ry="67.700" transform="rotate(15 829 452)"/>
                    </g>
                    <!-- machine coordinate system -->
                    <g fill="none" stroke="#a4686c" stroke-width=".8"><path d="M847 437V407L833 417M833 418L866 426M862 460V424M846 443L879 450L862 460"/></g>
                    <path d="M829 453L865 432" stroke="#2f9140" stroke-width="1.500"/><path d="M871 426l-11 3 4 6Z" fill="#238a34"/><path d="M855 432l6-1 1 5-4 1Z" fill="#a24438"/>
                    <path d="M829 453L897 468" stroke="#c0202a" stroke-width="1.700"/><path d="M911 471l-18-7 1 8Z" fill="#c81824"/><path d="M881 463l9 1-1 5-9-3Z" fill="#9a7470"/>
                    <path d="M829 453L832 382" stroke="#1a3fc4" stroke-width="2"/><path d="M833 366l-4 17h7Z" fill="#1634b8"/><path d="M830 391h4v7h-4Z" fill="#8a4a48"/>
                    <g class="axis"><text x="813" y="364" fill="#4046b4">ZM</text><text x="856" y="423" fill="#3d9148">YM</text><text x="893.500" y="485" fill="#c23a48">XM</text></g>
                    <!-- cursor -->
                    <circle cx="878" cy="377.500" r="7" fill="none" stroke="#444" stroke-dasharray="7 4" stroke-dashoffset="-2"/><path d="M878 367.500v20M868 377.500h20" stroke="#222" stroke-width="2"/><path d="M878 368v19M868.500 377.500h19" stroke="#fff" stroke-width=".6"/>
                    <!-- view triad -->
                    <path d="M402 567L415 559L438 565L425 572ZM402 567L401 592L425 597L425 572M438 565L437 588L425 597" fill="#fff" stroke="#8b8b8b" stroke-width=".9"/>
                    <path d="M420.500 566V545" stroke="#1634a8" stroke-width="2.600"/><path d="M421.500 536l-4 13h8Z" fill="#1634a8"/>
                    <path d="M431 581l18 4" stroke="#b81c30" stroke-width="2.400"/><path d="M460 588l-12-6-1 7Z" fill="#b81c30"/><path d="M437 565l4 1-2 3Z" fill="#666"/>
                    <g class="triad"><text x="418.500" y="531" fill="#5058b8">Z</text><text x="441.500" y="566" fill="#666">Y</text><text x="463" y="593" fill="#b8485a">X</text></g>
                </svg>
            </section>
        </main>
        <div class="status"></div>

        <footer class="taskbar">
            <div class="start"><svg class="i16"><use href="#winlogo"/></svg></div>
            <div class="search">
                <svg viewBox="0 0 16 16"><circle cx="10" cy="6" r="5" fill="none" stroke="#222" stroke-width="1.200"/><path d="M6.500 9.500L1 15" stroke="#222" stroke-width="1.300"/></svg>
                <span>Type here to search</span>
                <svg class="beach" viewBox="0 0 72 35">
                    <path d="M0 35Q8 22 32 22q20 0 18 13Z" fill="#3f98dc"/><path d="M10 35q10-9 40-9v9Z" fill="#7cc2ee"/><path d="M28 35q6-8 16-10 14-5 28-2v12Z" fill="#f3d49a"/>
                    <path d="M52 23q8-5 20-4v10q-12 0-20-6Z" fill="#7f9a2c"/><path d="M45 31Q48 18 42 9l3-1q6 9 3 23ZM56 21q2-6 0-10M64 20q1-6-1-10" fill="#8a5c2c" stroke="#8a5c2c"/>
                    <path d="M43 9q-7-6-15 1 7-1 9 1-6 2-5 8 5-7 11-8 6 2 8 8 3-6-3-9 5 0 6 2 1-7-8-5 1-4 5-4-8-2-8 6Z" fill="#5d8f34"/><path d="M56 12q-4-4-6 1M56 12q-2 1-2 5M56 12q3-4 6 0M63 10q-2-5-6-1M63 10q5-5 8 0M63 10q4 0 5 6" fill="none" stroke="#76993a" stroke-width="2"/>
                </svg>
            </div>
            <div class="apps">
                <div><svg class="i16"><use href="#taskview"/></svg></div>
                <div class="run"><svg class="i22"><use href="#edge"/></svg></div>
                <div><svg class="i22"><use href="#explorer"/></svg></div>
                <div><svg class="i22"><use href="#store"/></svg></div>
                <div><svg class="i22"><use href="#mail"/></svg></div>
                <div></div>
                <div><b class="fb">f</b></div>
                <div><svg class="i22"><use href="#google"/></svg></div>
                <div class="run"><b class="zm">zm</b></div>
                <div class="run"><svg class="i22"><use href="#chat"/></svg></div>
                <div class="run"><svg class="i22"><use href="#snap"/></svg></div>
                <div class="run"><svg class="i22"><use href="#vmbox"/></svg></div>
                <div class="run"><b class="nxapp">NX</b></div>
            </div>
            <div class="tray">
                <svg class="i18"><circle cx="9" cy="9" r="9" fill="url(#sun)"/></svg>
                <span class="temp">34°C</span>
                <svg class="i12"><use href="#s-up"/></svg>
                <svg class="i16"><use href="#cam"/></svg>
                <svg class="i16"><use href="#batt"/></svg>
                <svg class="i14"><use href="#wifi"/></svg>
                <svg class="i16"><use href="#vol"/></svg>
                <span class="lang">ع</span>
                <div class="time">3:32 PM<br>7/5/2024</div>
                <div class="note"><svg class="i16"><use href="#note"/></svg><b>14</b></div>
                <i class="peek"></i>
            </div>
        </footer>
    </div>
</body>

</html>
```
FILE: styles.css
```css
*{
    margin: 0;
    padding: 0;
    box-sizing: border-box;
}
body{
    background-color: #000;
    font-family: "Noto Sans", "Open Sans", sans-serif;
    font-size: 10.5px;
    letter-spacing: -.26px;
    color: #2a2a2a;
    overflow: hidden;
}
svg{
    display: block;
    flex: none;
}
.sprite{
    position: absolute;
}
.i12{ width: 12px; height: 12px; }
.i14{ width: 14px; height: 14px; }
.i16{ width: 16px; height: 16px; }
.i18{ width: 18px; height: 18px; }
.i20{ width: 20px; height: 20px; }
.i22{ width: 22px; height: 22px; }
.i24{ width: 23px; height: 23px; }
.i28{ width: 28px; height: 28px; }
.i30{ width: 30px; height: 30px; }
.screen{
    width: 1215px;
    height: 687px;
    margin-top: 16px;
    background-color: #fff;
    overflow: hidden;
    white-space: nowrap;
}
/* small drop-down arrow */
.dd{
    display: block;
    width: 0;
    height: 0;
    flex: none;
    border: 3px solid transparent;
    border-top-color: #111;
    border-bottom: none;
}
.dd.light{
    border-top-color: #fff;
}
.dd.over{
    width: 7px;
    height: 6px;
    border: none;
    border-top: 1px solid #fff;
    background: linear-gradient(#fff, #fff) center 2px / 3px 3px no-repeat;
}
.dd.wide{
    border-width: 4px;
    border-bottom: none;
}
.dd.none{
    visibility: hidden;
}

/* title bar */
.titlebar{
    height: 49px;
    background: linear-gradient(90deg, #00648a, #007a9f);
    color: #fff;
}
.quick{
    height: 24px;
    display: grid;
    grid-template-columns: 38px 26px 22px 17px 21px 21px 20px 26px 22px 17px 26px 26px 21px 18px 43px 11px 310px 392px 78px 20px 22px 18px;
    align-items: center;
}
.nx{
    font: bold 18px "Open Sans", sans-serif;
    letter-spacing: -.5px;
}
.title{
    letter-spacing: -.1px;
}
.siemens{
    font: 800 11.5px "Open Sans", sans-serif;
    letter-spacing: .5px;
}
.min{
    width: 8px;
    height: 2px;
    margin-top: 9px;
    background-color: #fff;
}
.tabs{
    height: 25px;
    padding-left: 11px;
    display: grid;
    grid-template-columns: 39px 75px 79px 70px 53px 66px 75px 87px 56px 86px 228px 24px 24px 151px 24px 23px 28px 16px;
    align-items: center;
    font-size: 11.5px;
    letter-spacing: -.3px;
}
.tabs .active{
    width: 60px;
    line-height: 20px;
    text-align: center;
    color: #f0e29a;
    border-bottom: 2px solid #f0dc7c;
}
.find{
    width: 142px;
    height: 17px;
    padding: 0 1px 0 3px;
    display: flex;
    align-items: center;
    justify-content: space-between;
    background-color: #fff;
    color: #a2a2a2;
    font-size: 10px;
    letter-spacing: -.1px;
}
.bang{
    width: 2px;
    height: 13px;
    margin-left: 2px;
    background: linear-gradient(#fff 9px, transparent 9px, transparent 11px, #fff 11px);
}

/* ribbon */
.ribbon{
    height: 80px;
    display: flex;
    border-bottom: 2px solid #eaeaea;
}
.group{
    border-right: 1px solid #e4e4e4;
}
.body{
    height: 65px;
    display: grid;
}
.foot{
    height: 13px;
    padding: 1px 6px 0 0;
    display: flex;
    align-items: center;
    color: #2b6c80;
}
.foot span{
    flex: 1;
    text-align: center;
    line-height: 13px;
}
.foot .dd{
    margin-top: -3px;
}
.insert{ width: 181px; }
.predict{ width: 172px; }
.actions{ width: 68px; }
.operations{ width: 95px; }
.display{ width: 233px; }
.anim{ width: 192px; }
.ipw{ width: 48px; }
.feature{ width: 81px; }
.post{ width: 88px; }
.rest{ width: 57px; border: none; }
.insert .body{ grid-template-columns: 38px 52px 56px 28px; }
.predict .body{ grid-template-columns: 146px 19px; }
.operations .body{ grid-template-columns: 6px 23px 23px 42px; }
.operations .three:first-child{ grid-column: 2; }
.display .body{ grid-template-columns: 9px 105px 52px 20px 51px; }
.display .list{ grid-column: 2; }
.anim .body{ grid-template-columns: 11px 43px 44px 86px; }
.anim .player:first-child{ grid-column: 2; }
.feature .body{ grid-template-columns: 11px 24px 47px; }
.feature .two{ grid-column: 2; }
.big{
    padding-top: 5px;
    display: flex;
    flex-direction: column;
    align-items: center;
    line-height: 11.5px;
    text-align: center;
}
.big svg{
    margin-bottom: 4px;
}
.big .dd{
    margin-top: 3px;
}
.big.off{
    color: #c9c9c9;
    letter-spacing: 0;
}
.big.more svg{
    height: 28px;
}
.line{
    display: flex;
    align-items: center;
    gap: 2px;
}
.two{
    padding-top: 3px;
    display: grid;
    grid-template-rows: 30px 30px;
    place-items: center;
    align-content: start;
}
.two.wide{
    padding-left: 10px;
    justify-items: start;
}
.three{
    padding-top: 2px;
    display: grid;
    grid-template-rows: 20px 20px 21px;
    place-items: center;
    align-content: start;
}
.cmd{
    display: flex;
    align-items: center;
    gap: 3px;
}
.three.list, .three.start{
    place-items: stretch start;
}
.list .cmd{
    width: 102px;
    padding-left: 2px;
    gap: 2px;
}
.list .short{
    width: 96px;
}
.on, .hot, .lit{
    background-color: #d6e6e8;
}
.tools{
    padding-top: 4px;
}
.hot{
    width: 26px;
    height: 27px;
    display: grid;
    place-items: center;
}
.holder{
    height: 34px;
    padding-left: 1px;
    display: flex;
    align-items: center;
    gap: 6px;
}
.flip{
    transform: rotate(180deg);
}
.player{
    justify-items: start;
}
.player div{
    display: flex;
    align-items: center;
    gap: 7px;
}
.speed{
    padding-top: 12px;
    text-align: center;
    line-height: 18px;
}
.speed span{
    margin-right: 5px;
    letter-spacing: -.1px;
}
.track{
    height: 16px;
    display: flex;
    align-items: center;
    justify-content: center;
    background: linear-gradient(#999, #999) center / 100% 3px no-repeat;
}
.track i{
    width: 7px;
    height: 14px;
    margin-right: 11px;
    background-color: #006a8c;
}
.start{
    padding-left: 10px;
}
.ipw .cmd{
    gap: 1px;
}
.ipw .far{
    margin-left: 4px;
}

/* selection bar */
.selbar{
    height: 25px;
    padding-left: 5px;
    display: grid;
    grid-template-columns: 15px 31px 12px 11px 130px 22px 139px 9px 22px 23px 21px 23px 22px 23px 13px 24px 11px 24px 12px 24px 13px 22px 17px 8px 23px 22px 26px 9px 26px 421px 12px;
    align-items: center;
    border-bottom: 2px solid #c9c9c9;
}
.burger{
    width: 9px;
    height: 9px;
    border-top: 1px solid #666;
    border-bottom: 1px solid #666;
    background: linear-gradient(#666, #666) center / 100% 1px no-repeat;
}
.sep{
    width: 1px;
    height: 18px;
    background-color: #e0e0e0;
}
.select{
    width: 123px;
    height: 19px;
    padding: 0 3px 0 2px;
    display: flex;
    align-items: center;
    justify-content: space-between;
    border: 1px solid #8c8c8c;
}
.second{
    width: 128px;
}
.low{
    margin-top: 5px;
}
.mcs{
    font: bold 7px "Noto Sans", sans-serif;
    fill: #444;
}

/* work area */
.work{
    height: 479px;
    display: flex;
    border-bottom: 1px solid #b4b4b4;
}
.rail{
    width: 27px;
    background-color: #dcdcdc;
    border-right: 1px solid #b8b8b8;
}
.railtop{
    height: 42px;
    padding: 4px 0 0 2px;
    border-bottom: 1px solid #b8b8b8;
}
.up{
    display: block;
    width: 0;
    margin: 12px 0 0 5px;
    border: 3px solid transparent;
    border-bottom-color: #111;
    border-top: none;
}
.raillist{
    height: 420px;
    overflow: hidden;
}
.raillist div{
    height: 39.2px;
    display: flex;
    align-items: center;
}
.raillist div:first-child{
    margin-top: -14px;
}
.raillist .cur{
    width: 27px;
    background-color: #fff;
}
.railend{
    height: 16px;
    padding: 5px 0 0 7px;
    border-top: 1px solid #b8b8b8;
}
.navigator{
    width: 326px;
    border-right: 1px solid #a8a8a8;
}
.navhead{
    height: 22px;
    padding: 0 10px 1px 4px;
    display: flex;
    align-items: center;
    gap: 3px;
}
.navhead span{
    flex: 1;
}
.maxi{
    width: 11px;
    height: 10px;
    border: 1px solid #222;
    border-top-width: 2px;
}
.navtools{
    height: 38px;
    padding: 4px 0 0 11px;
    display: flex;
    gap: 2.6px;
}
.navtools div{
    width: 28px;
    height: 29px;
    display: grid;
    place-items: center;
}
.framed{
    border: 1px solid #777;
}
.framed.dim{
    border-color: #ccc;
    margin-left: 2px;
}
.grid{
    width: 300px;
    height: 407px;
    margin-left: 12px;
    border: 1px solid #e2e2e2;
    border-top: none;
}
.cols{
    height: 17px;
    display: grid;
    grid-template-columns: 180px 45px 45px 28px;
    background-color: #f1f1f1;
    line-height: 18px;
}
.cols span{
    padding-left: 5px;
    border-right: 1px solid #dcdcdc;
    overflow: hidden;
}
.cols span:first-child{
    padding-left: 6px;
}
.cols span:last-child{
    border: none;
}
.rows{
    height: 373px;
    display: grid;
    grid-template-columns: 180px 45px 45px 28px;
    background: repeating-linear-gradient(#fff 0, #fff 17px, #f3f3f3 17px, #f3f3f3 18px, #fafafa 18px, #fafafa 35px, #f3f3f3 35px, #f3f3f3 36px);
}
.names{
    border-right: 2px solid #444;
}
.col{
    border-right: 1px solid #f0f0f0;
}
.names div{
    height: 18px;
    display: flex;
    align-items: center;
}
.fold{
    width: 14px;
    height: 13px;
    margin-right: 3px;
}
.root{
    padding-left: 6px;
    letter-spacing: -.2px;
}
.minus{
    width: 5px;
    height: 1px;
    margin-right: 13px;
    background-color: #444;
}
.stem{
    width: 1px;
    height: 12px;
    margin-right: 7px;
    background-color: #d8c44c;
}
.kid{
    padding-left: 25px;
    letter-spacing: -.2px;
}
.elbow{
    width: 10px;
    height: 18px;
    border-left: 1px solid #ccc;
    background: linear-gradient(#ccc, #ccc) center / 100% 1px no-repeat;
}
.last .elbow{
    height: 9px;
    margin-bottom: 9px;
    background: none;
    border-bottom: 1px solid #ccc;
}
.tick{
    width: 13px;
    height: 12px;
    margin-right: 1px;
}
.hscroll{
    height: 16px;
    padding: 0 5px 0 4px;
    display: flex;
    align-items: center;
    gap: 5px;
}
.hscroll svg{
    width: 7px;
    height: 9px;
}
.hscroll i{
    width: 15px;
    height: 14px;
    background-color: #cfcfcf;
    margin-right: auto;
}
.view{
    flex: 1;
}
.viewtabs{
    height: 23px;
    padding-top: 1px;
    display: flex;
    border-bottom: 2px solid #0a5f80;
}
.vt{
    width: 122px;
    padding: 0 0 2px 4px;
    display: flex;
    align-items: center;
    gap: 3px;
}
.vt.active{
    width: 109px;
    background-color: #00648a;
    color: #fff;
}
.doc{
    width: 9px;
    height: 10px;
    margin-left: 2px;
}
.x{
    width: 9px;
    height: 9px;
    margin-left: 2px;
}
.canvas{
    width: 862px;
    height: 455px;
}
.axis{
    font: 12px "Liberation Sans", sans-serif;
}
.triad{
    font: 10px "Liberation Sans", sans-serif;
}
.status{
    height: 19px;
}

/* windows taskbar */
.taskbar{
    height: 35px;
    display: flex;
    background: linear-gradient(90deg, #20373c 0, #22383f 55%, #1c2b49 100%);
    color: #fff;
}
.taskbar .start{
    width: 36px;
    padding: 10px 0 0 7px;
}
.search{
    width: 257px;
    padding-left: 11px;
    display: flex;
    align-items: center;
    background-color: #f1f1f1;
    color: #3c3c3c;
    font-size: 12.5px;
    letter-spacing: -.05px;
}
.search svg{
    width: 15px;
    height: 15px;
    margin-right: 10px;
}
.search .beach{
    width: 72px;
    height: 35px;
    margin: 0 0 0 auto;
}
.apps{
    display: flex;
}
.apps div{
    width: 44px;
    height: 35px;
    display: grid;
    place-items: center;
}
.apps .run{
    background: linear-gradient(#8fc1ea, #8fc1ea) center bottom / 36px 2px no-repeat;
}
.fb, .zm{
    width: 22px;
    height: 22px;
    border-radius: 50%;
    background-color: #1565ea;
    text-align: center;
}
.fb{
    font: bold 18px/23px "Open Sans", sans-serif;
}
.zm{
    font: bold 11px/20px "Open Sans", sans-serif;
}
.nxapp{
    width: 22px;
    height: 22px;
    background-color: #8c1418;
    border-left: 2px solid #1d8a80;
    border-bottom: 2px solid #1d8a80;
    font: bold 10px/21px "Open Sans", sans-serif;
    text-align: center;
}
.tray{
    padding-left: 35px;
    display: grid;
    grid-template-columns: 26px 49px 22px 21px 24px 18px 32px 21px 63px 25px 6px;
    align-items: center;
    letter-spacing: -.1px;
}
.temp{
    font-size: 12px;
}
.lang{
    font-size: 12px;
}
.time{
    font-size: 10.5px;
    line-height: 16px;
    text-align: center;
    width: 50px;
}
.note{
    position: relative;
}
.note b{
    position: absolute;
    left: 6px;
    top: 5px;
    width: 15px;
    height: 15px;
    border: 1px solid #aaa;
    border-radius: 50%;
    background-color: #26344c;
    font-size: 8.5px;
    line-height: 13px;
    text-align: center;
}
.peek{
    width: 1px;
    height: 35px;
    background-color: #6f7c92;
}
```
